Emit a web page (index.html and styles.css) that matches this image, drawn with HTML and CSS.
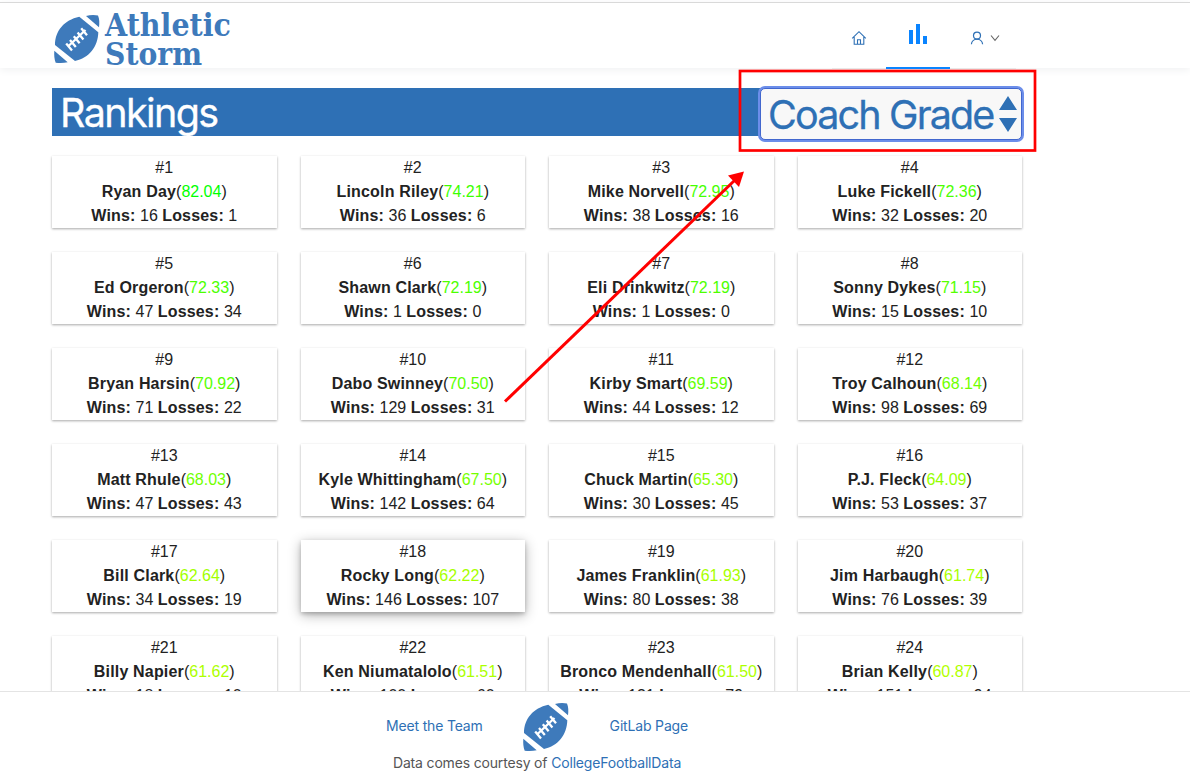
FILE: index.html
```
<!DOCTYPE html>
<html lang="en">
<head>
<meta charset="utf-8">
<title>Athletic Storm</title>
<link rel="stylesheet" href="styles.css">
</head>
<body>
<svg class="defs" width="0" height="0">
  <symbol id="football" viewBox="0 0 46 50">
    <path fill="#3e7abb" d="M25.3 2.7C10 6 1 17 1 31L21 47C35 44 44 33 44.3 18.3ZM32 2C36 .7 41 .7 44 1.5C45.5 5 45.5 9 45 13.3ZM.3 36.7L13.7 48.3C10 49.3 5 49.3 1.7 48.7C.3 45 0 41 .3 36.7Z"/>
    <path fill="none" stroke="#fff" stroke-width="2.300" d="M14 32.500L31.500 16M12.200 29.500L18 36.500M16 26L21.800 33M19.800 22.200L25.600 29.200M23.600 18.400L29.400 25.400M27.200 14.200L33 21.200"/>
  </symbol>
</svg>
<header class="header">
  <a class="brand">
    <svg class="ball" viewBox="0 0 46 50"><use href="#football"/></svg>
    <svg class="wordmark" viewBox="0 0 130 60">
      <text x="1" y="26.500" textLength="126" lengthAdjust="spacingAndGlyphs">Athletic</text>
      <text x="1" y="56" textLength="97" lengthAdjust="spacingAndGlyphs">Storm</text>
    </svg>
  </a>
  <nav class="nav">
    <a class="item"><svg width="16" height="16" viewBox="0 0 16 16" fill="none" stroke="#2e70b5" stroke-width="1.1"><path d="M1.200 8.300L8 1.700L14.800 8.300M3.200 7V14.300H12.800V7M6.500 14V9.800H9.500V14"/></svg></a>
    <a class="item active"><svg width="20" height="20" viewBox="0 0 20 20" fill="#0a84ff"><path d="M1 6h4v14H1zM8 0h4v20H8zM15 12h4v8h-4z"/></svg></a>
    <a class="item user"><svg width="14" height="14" viewBox="0 0 14 14" fill="none" stroke="#2e70b5" stroke-width="1.200"><circle cx="7" cy="4.600" r="3.500"/><path d="M1.400 13.300C1.600 10.300 4 8.100 7 8.100S12.400 10.300 12.600 13.300"/></svg><svg class="caret" width="10" height="8" viewBox="0 0 10 8" fill="none" stroke="#666" stroke-width="1.100"><path d="M1 1.500L5 6.300L9 1.500"/></svg></a>
  </nav>
</header>
<main class="main">
  <div class="bar">
    <h1 class="title">Rankings</h1>
    <div class="select"><span class="value">Coach Grade</span><svg width="18" height="36" viewBox="0 0 18 36" fill="#2e70b5"><path d="M9 0L18 14H0ZM0 22H18L9 36Z"/></svg></div>
  </div>
  <div class="grid">
    <div class="card"><p>#1</p><p><b>Ryan Day</b>(<span style="color:#00ff00">82.04</span>)</p><p><b>Wins:</b> 16 <b>Losses:</b> 1</p></div>
    <div class="card"><p>#2</p><p><b>Lincoln Riley</b>(<span style="color:#3cff00">74.21</span>)</p><p><b>Wins:</b> 36 <b>Losses:</b> 6</p></div>
    <div class="card"><p>#3</p><p><b>Mike Norvell</b>(<span style="color:#46ff00">72.95</span>)</p><p><b>Wins:</b> 38 <b>Losses:</b> 16</p></div>
    <div class="card"><p>#4</p><p><b>Luke Fickell</b>(<span style="color:#4bff00">72.36</span>)</p><p><b>Wins:</b> 32 <b>Losses:</b> 20</p></div>
    <div class="card"><p>#5</p><p><b>Ed Orgeron</b>(<span style="color:#4bff00">72.33</span>)</p><p><b>Wins:</b> 47 <b>Losses:</b> 34</p></div>
    <div class="card"><p>#6</p><p><b>Shawn Clark</b>(<span style="color:#4cff00">72.19</span>)</p><p><b>Wins:</b> 1 <b>Losses:</b> 0</p></div>
    <div class="card"><p>#7</p><p><b>Eli Drinkwitz</b>(<span style="color:#4cff00">72.19</span>)</p><p><b>Wins:</b> 1 <b>Losses:</b> 0</p></div>
    <div class="card"><p>#8</p><p><b>Sonny Dykes</b>(<span style="color:#55ff00">71.15</span>)</p><p><b>Wins:</b> 15 <b>Losses:</b> 10</p></div>
    <div class="card"><p>#9</p><p><b>Bryan Harsin</b>(<span style="color:#57ff00">70.92</span>)</p><p><b>Wins:</b> 71 <b>Losses:</b> 22</p></div>
    <div class="card"><p>#10</p><p><b>Dabo Swinney</b>(<span style="color:#5bff00">70.50</span>)</p><p><b>Wins:</b> 129 <b>Losses:</b> 31</p></div>
    <div class="card"><p>#11</p><p><b>Kirby Smart</b>(<span style="color:#63ff00">69.59</span>)</p><p><b>Wins:</b> 44 <b>Losses:</b> 12</p></div>
    <div class="card"><p>#12</p><p><b>Troy Calhoun</b>(<span style="color:#70ff00">68.14</span>)</p><p><b>Wins:</b> 98 <b>Losses:</b> 69</p></div>
    <div class="card"><p>#13</p><p><b>Matt Rhule</b>(<span style="color:#71ff00">68.03</span>)</p><p><b>Wins:</b> 47 <b>Losses:</b> 43</p></div>
    <div class="card"><p>#14</p><p><b>Kyle Whittingham</b>(<span style="color:#76ff00">67.50</span>)</p><p><b>Wins:</b> 142 <b>Losses:</b> 64</p></div>
    <div class="card"><p>#15</p><p><b>Chuck Martin</b>(<span style="color:#8aff00">65.30</span>)</p><p><b>Wins:</b> 30 <b>Losses:</b> 45</p></div>
    <div class="card"><p>#16</p><p><b>P.J. Fleck</b>(<span style="color:#95ff00">64.09</span>)</p><p><b>Wins:</b> 53 <b>Losses:</b> 37</p></div>
    <div class="card"><p>#17</p><p><b>Bill Clark</b>(<span style="color:#a2ff00">62.64</span>)</p><p><b>Wins:</b> 34 <b>Losses:</b> 19</p></div>
    <div class="card raised"><p>#18</p><p><b>Rocky Long</b>(<span style="color:#a6ff00">62.22</span>)</p><p><b>Wins:</b> 146 <b>Losses:</b> 107</p></div>
    <div class="card"><p>#19</p><p><b>James Franklin</b>(<span style="color:#a9ff00">61.93</span>)</p><p><b>Wins:</b> 80 <b>Losses:</b> 38</p></div>
    <div class="card"><p>#20</p><p><b>Jim Harbaugh</b>(<span style="color:#aaff00">61.74</span>)</p><p><b>Wins:</b> 76 <b>Losses:</b> 39</p></div>
    <div class="card"><p>#21</p><p><b>Billy Napier</b>(<span style="color:#acff00">61.62</span>)</p><p><b>Wins:</b> 18 <b>Losses:</b> 10</p></div>
    <div class="card"><p>#22</p><p><b>Ken Niumatalolo</b>(<span style="color:#acff00">61.51</span>)</p><p><b>Wins:</b> 100 <b>Losses:</b> 60</p></div>
    <div class="card"><p>#23</p><p><b>Bronco Mendenhall</b>(<span style="color:#adff00">61.50</span>)</p><p><b>Wins:</b> 131 <b>Losses:</b> 79</p></div>
    <div class="card"><p>#24</p><p><b>Brian Kelly</b>(<span style="color:#b2ff00">60.87</span>)</p><p><b>Wins:</b> 151 <b>Losses:</b> 94</p></div>
  </div>
</main>
<footer class="footer">
  <div class="links"><a class="team">Meet the Team</a><svg class="ball" viewBox="0 0 46 50"><use href="#football"/></svg><a class="gitlab">GitLab Page</a></div>
  <p class="credit">Data comes courtesy of <a>CollegeFootballData</a></p>
</footer>
<svg class="annotation" width="1190" height="781" viewBox="0 0 1190 781">
  <rect x="740" y="71" width="295" height="79.500" fill="none" stroke="#f00" stroke-width="2.700"/>
  <path d="M505 401.500L735 180" stroke="#f00" stroke-width="3"/>
  <path d="M744 171.500L739 187L728 175.500Z" fill="#f00"/>
</svg>
</body>
</html>
```
FILE: styles.css
```
* { box-sizing: border-box; }
body {
  margin: 0;
  height: 781px;
  overflow: hidden;
  display: flex;
  flex-direction: column;
  background: #fff;
  color: #222;
  font-family: "Liberation Sans", Arial, sans-serif;
  position: relative;
}
p, h1 { margin: 0; }
.defs { position: absolute; }
.header {
  flex: none;
  height: 66px;
  margin-top: 2px;
  border-top: 1px solid #d9d9d9;
  display: flex;
  justify-content: space-between;
  padding: 0 174px 0 54px;
  box-shadow: 0 2px 8px #f0f1f2;
}
.brand { display: flex; }
.ball { width: 46px; height: 50px; flex: none; }
.brand .ball { margin-top: 11px; }
.wordmark { width: 130px; height: 60px; margin: 6px 0 0 4px; overflow: visible; }
.wordmark text {
  font-family: "Roboto Slab", "DejaVu Serif", serif;
  font-weight: 700;
  font-size: 32px;
  fill: #3e7abb;
}
.nav { display: flex; height: 66px; border-bottom: 1px solid #e8e8e8; }
.item { display: flex; justify-content: center; align-items: center; width: 54px; padding-top: 4px; }
.item.active { width: 64px; border-bottom: 2px solid #0a84ff; height: 66px; padding: 0 0 3px; }
.item.user { width: 66px; gap: 6px; padding-left: 4px; }
.main { flex: 1; min-height: 0; overflow: hidden; padding: 20px 168px 0 52px; }
.bar {
  height: 48px;
  background: #2e70b5;
  display: flex;
  justify-content: space-between;
  padding-left: 8px;
}
.title, .value { font: 400 39.5px/50px Inter, sans-serif; letter-spacing: -1.6px; white-space: nowrap; }
.title { color: #fff; -webkit-text-stroke: .3px #fff; }
.value { letter-spacing: -1.85px; margin-top: 2px; -webkit-text-stroke: .3px #2e70b5; }
.select {
  height: 52px;
  width: 262px;
  display: flex;
  align-items: center;
  justify-content: space-between;
  padding: 0 4px 0 7px;
  border: 1px solid #4267ce;
  border-radius: 5px;
  background: #f8f8f8;
  color: #2e70b5;
  box-shadow: 0 0 0 2px #6c8eea;
}
.select svg { flex: none; }
.grid {
  display: grid;
  grid-template-columns: repeat(4, 1fr);
  gap: 24px;
  margin-top: 20px;
}
.card {
  height: 72px;
  text-align: center;
  font-size: 16px;
  line-height: 24px;
  box-shadow: 0 1px 3px rgba(0,0,0,.12), 0 1px 2px rgba(0,0,0,.24);
}
.card b { letter-spacing: .17px; }
.card.raised { box-shadow: 0 3px 12px rgba(0,0,0,.3), 0 2px 4px rgba(0,0,0,.2); }
.footer {
  flex: none;
  height: 90px;
  border-top: 1px solid #e4e4e4;
  background: #fff;
  color: #555;
  font: 14px/22px Inter, sans-serif;
  letter-spacing: -.17px;
}
.footer a { color: #2e70b5; }
.links { display: flex; align-items: center; height: 50px; margin-top: 10px; padding-left: 386px; }
.links a { white-space: nowrap; margin-top: -2px; }
.links .ball { margin-left: 40px; }
.links .gitlab { margin-left: 41px; }
.credit { padding-left: 393px; }
.annotation { position: absolute; left: 0; top: 0; }
```
